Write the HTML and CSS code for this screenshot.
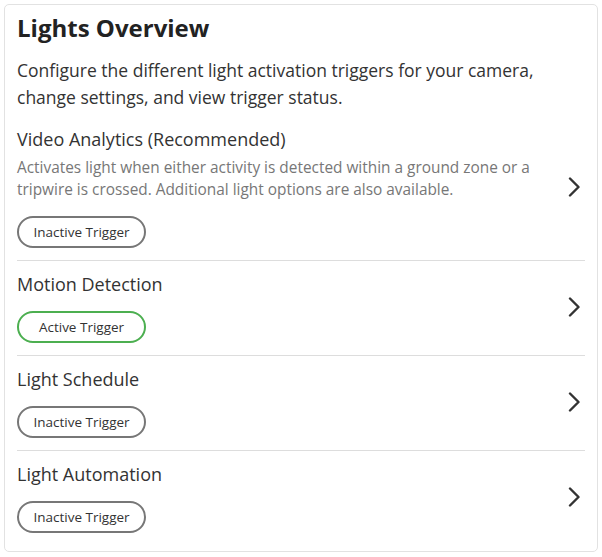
FILE: index.html
```html
<!DOCTYPE html>
<html lang="en">

<head>
    <meta charset="UTF-8">
    <meta name="viewport" content="width=device-width, initial-scale=1.0">
    <title>Lights Overview</title>
    <link rel="stylesheet" href="styles.css">
</head>

<body>
    <div class="card">
        <h1 class="title">Lights Overview</h1>
        <p class="intro">Configure the different light activation triggers for your camera, change settings, and view trigger status.</p>
        <ul class="triggers">
            <li class="trigger">
                <div class="info">
                    <div class="name">Video Analytics (Recommended)</div>
                    <div class="desc">Activates light when either activity is detected within a ground zone or a tripwire is crossed. Additional light options are also available.</div>
                    <span class="pill">Inactive Trigger</span>
                </div>
                <svg class="arrow" viewBox="0 0 16 20" width="16" height="20"><path d="M5 1.5 L13.5 10 L5 18.5" /></svg>
            </li>
            <li class="trigger">
                <div class="info">
                    <div class="name">Motion Detection</div>
                    <span class="pill active">Active Trigger</span>
                </div>
                <svg class="arrow" viewBox="0 0 16 20" width="16" height="20"><path d="M5 1.5 L13.5 10 L5 18.5" /></svg>
            </li>
            <li class="trigger">
                <div class="info">
                    <div class="name">Light Schedule</div>
                    <span class="pill">Inactive Trigger</span>
                </div>
                <svg class="arrow" viewBox="0 0 16 20" width="16" height="20"><path d="M5 1.5 L13.5 10 L5 18.5" /></svg>
            </li>
            <li class="trigger">
                <div class="info">
                    <div class="name">Light Automation</div>
                    <span class="pill">Inactive Trigger</span>
                </div>
                <svg class="arrow" viewBox="0 0 16 20" width="16" height="20"><path d="M5 1.5 L13.5 10 L5 18.5" /></svg>
            </li>
        </ul>
    </div>
</body>

</html>
```

FILE: styles.css
```css
body {
    margin: 0;
    background-color: #fff;
    font-family: "Open Sans", "Noto Sans", sans-serif;
    color: #333;
}

.card {
    width: 594px;
    height: 548px;
    box-sizing: border-box;
    margin: 4px 0 0 4px;
    padding: 7px 12px 0;
    border: 1px solid #e2e2e2;
    border-radius: 5px;
}

.title {
    margin: 0;
    font-size: 24px;
    line-height: 32px;
    font-weight: 700;
    color: #222;
}

.intro {
    max-width: 545px;
    margin: 13px 0 5px;
    font-size: 17.5px;
    line-height: 27px;
    color: #333;
}

.triggers {
    margin: 0;
    padding: 0;
    list-style: none;
}

.trigger {
    display: flex;
    align-items: center;
    padding: 10px 0 12px;
}

.trigger + .trigger {
    border-top: 1px solid #ddd;
}

.trigger:last-child {
    padding-bottom: 13px;
}

.info {
    flex: 1;
}

.name {
    font-size: 18px;
    line-height: 26px;
    color: #333;
}

.desc {
    margin-top: 5px;
    font-size: 15.4px;
    line-height: 22px;
    color: #777;
}

.pill {
    display: inline-flex;
    align-items: center;
    justify-content: center;
    box-sizing: border-box;
    width: 129px;
    height: 32px;
    margin-top: 14px;
    border: 2px solid #777;
    border-radius: 16px;
    font-size: 13.5px;
    color: #333;
}

.desc + .pill {
    margin-top: 15px;
}

.pill.active {
    border-color: #4caf50;
}

.arrow {
    margin-right: 4px;
    fill: none;
    stroke: #333;
    stroke-width: 2.4;
    stroke-linecap: round;
    stroke-linejoin: round;
}
```
